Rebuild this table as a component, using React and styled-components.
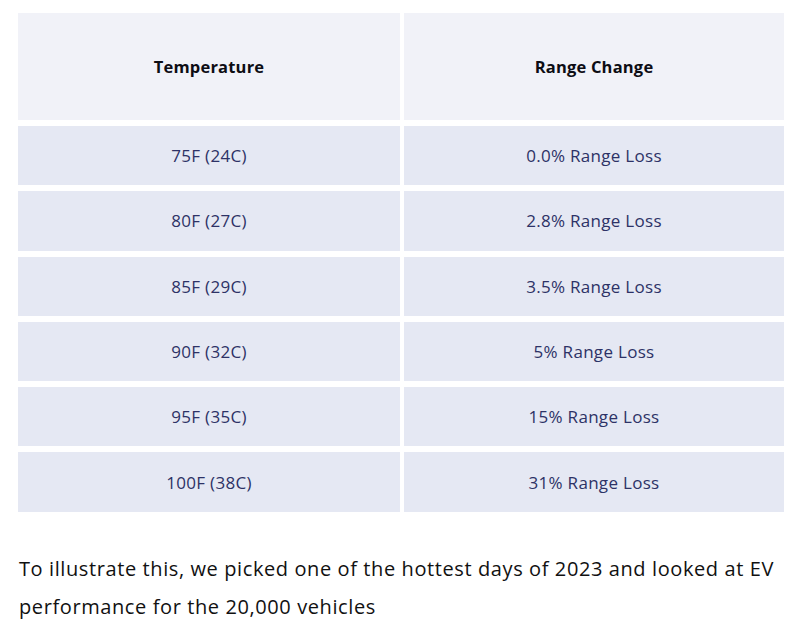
import React from "react";
import styled, { createGlobalStyle } from "styled-components";

const GlobalStyle = createGlobalStyle`
  body {
    margin: 0;
    background: #ffffff;
    font-family: "Open Sans", "DejaVu Sans", sans-serif;
  }
`;

const Page = styled.div`
  padding: 13px 16px 0 18px;
`;

const Table = styled.div`
  display: grid;
  grid-template-columns: 382px 380px;
  grid-template-rows: 107px;
  grid-auto-rows: 59.3px;
  column-gap: 4px;
  row-gap: 6px;
`;

const HeadCell = styled.div`
  display: flex;
  align-items: center;
  justify-content: center;
  background: #f1f2f8;
  color: #0d0d14;
  font-size: 16.5px;
  font-weight: 700;
  letter-spacing: 0.2px;
`;

const Cell = styled.div`
  display: flex;
  align-items: center;
  justify-content: center;
  background: #e5e8f3;
  color: #2d3266;
  font-size: 17px;
  letter-spacing: 0.3px;
`;

const Paragraph = styled.p`
  margin: 38px 0 0 1px;
  color: #111111;
  font-size: 20px;
  letter-spacing: 0.6px;
  line-height: 38px;
`;

const rows = [
  ["75F (24C)", "0.0% Range Loss"],
  ["80F (27C)", "2.8% Range Loss"],
  ["85F (29C)", "3.5% Range Loss"],
  ["90F (32C)", "5% Range Loss"],
  ["95F (35C)", "15% Range Loss"],
  ["100F (38C)", "31% Range Loss"],
];

export default function App() {
  return (
    <>
      <GlobalStyle />
      <Page>
        <Table>
          <HeadCell>Temperature</HeadCell>
          <HeadCell>Range Change</HeadCell>
          {rows.map(([temp, change]) => (
            <React.Fragment key={temp}>
              <Cell>{temp}</Cell>
              <Cell>{change}</Cell>
            </React.Fragment>
          ))}
        </Table>
        <Paragraph>
          To illustrate this, we picked one of the hottest days of 2023 and
          looked at EV performance for the 20,000 vehicles
        </Paragraph>
      </Page>
    </>
  );
}
